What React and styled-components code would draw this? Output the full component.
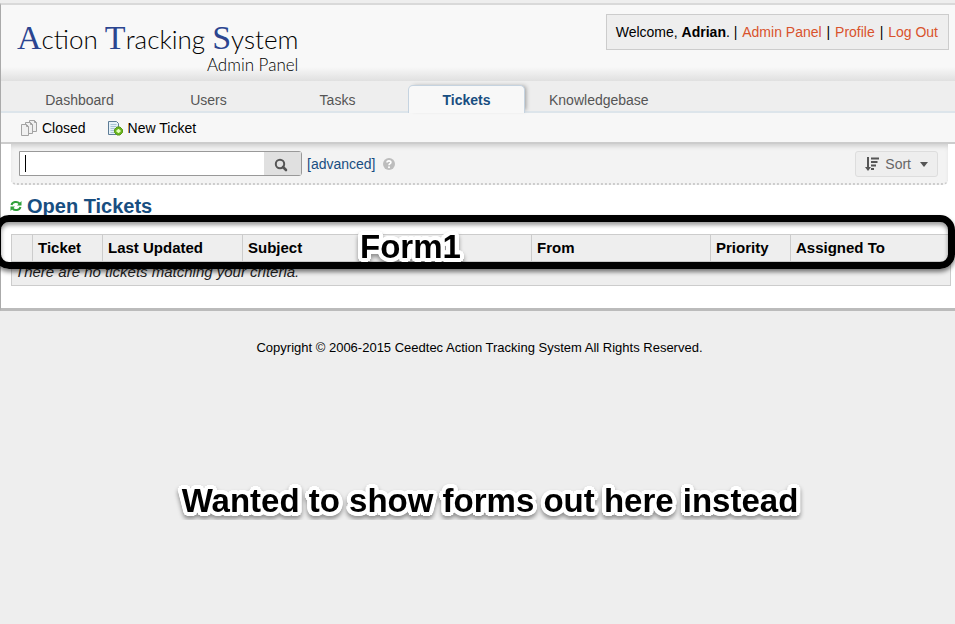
import React, { useState } from 'react';
import styled, { createGlobalStyle } from 'styled-components';

const tabs = ['Dashboard', 'Users', 'Tasks', 'Tickets', 'Knowledgebase'];

const columns = [
  { label: '', width: 21 },
  { label: 'Ticket', width: 70 },
  { label: 'Last Updated', width: 140 },
  { label: 'Subject' },
  { label: 'From', width: 179 },
  { label: 'Priority', width: 80 },
  { label: 'Assigned To', width: 160 },
];

// Ring of hard shadows, gives the notes a rounded white outline
const outline = Array.from({ length: 24 }, (_, i) => {
  const angle = (i * Math.PI) / 12;
  return `${Math.round(4 * Math.cos(angle))}px ${Math.round(4 * Math.sin(angle))}px 0 #fff`;
}).join(', ');

const ClosedIcon = () => (
  <svg width="16" height="16" viewBox="0 0 16 16" fill="#f0f0f0" stroke="#a3a3a3" aria-hidden="true">
    <path d="M8.500 .5H13.500L15.500 2.500v9h-7z" />
    <path d="M4.500 2.500H9.500L11.500 4.500v9h-7z" />
    <path d="M.5 4.500H5.500L7.500 6.500v9H.5z" />
    <path d="M5.500 4.500v2h2M9.500 2.500v2h2M13.500 .5v2h2" fill="none" />
  </svg>
);

const NewTicketIcon = () => (
  <svg width="16" height="16" viewBox="0 0 16 16" aria-hidden="true">
    <path d="M1.500 1.500h8l2 2v11h-10z" fill="#e6f1f8" stroke="#5d7c96" />
    <path d="M3.500 4.500h6M3.500 6.500h6M3.500 8.500h5M3.500 10.500h4M3.500 12.500h4" stroke="#a9c5d6" />
    <path d="M10 7h3l2.500 2.500v3L13 15h-3l-2.500-2.500v-3z" fill="#69b41e" stroke="#5a9a1a" />
    <path d="M11.500 9v4M9.500 11h4" stroke="#e6ffc0" strokeWidth="1.800" />
  </svg>
);

const SearchIcon = () => (
  <svg width="14" height="14" viewBox="0 0 14 14" fill="none" stroke="#555" strokeWidth="2" aria-hidden="true">
    <circle cx="6" cy="6" r="4.200" />
    <path d="M9 9l3 3" strokeWidth="2.600" strokeLinecap="round" />
  </svg>
);

const HelpIcon = () => (
  <svg width="12" height="12" viewBox="0 0 12 12" aria-hidden="true">
    <circle cx="6" cy="6" r="6" fill="#bdbdbd" />
    <path d="M4 4.600C4 2.200 8 2.300 7.900 4.500C7.800 5.700 6 5.700 6 7.300" fill="none" stroke="#fff" strokeWidth="1.600" />
    <circle cx="6" cy="9.200" r="1" fill="#fff" />
  </svg>
);

const SortIcon = () => (
  <svg width="14" height="14" viewBox="0 0 14 14" stroke="#555" fill="none" aria-hidden="true">
    <path d="M3 0v11" strokeWidth="2" />
    <path d="M0 10h6L3 14z" fill="#555" stroke="none" />
    <path d="M6 1.500H14M6 5H12.500M6 8.500H11M6 12H9" strokeWidth="2" />
  </svg>
);

const RefreshIcon = () => (
  <svg width="12" height="12" viewBox="0 0 12 12" fill="none" stroke="#2fa03a" strokeWidth="2" aria-hidden="true">
    <path d="M1.500 5A4.500 3.800 0 0 1 9.500 3.500" />
    <path d="M10.500 7A4.500 3.800 0 0 1 2.500 8.500" />
    <path d="M11.500 1v4.500H7zM.5 11V6.500H5z" fill="#2fa03a" stroke="none" />
  </svg>
);

const App = () => {
  const [query, setQuery] = useState('');
  const [activeTab, setActiveTab] = useState('Tickets');

  return (
    <>
      <GlobalStyle />
      <Container>
        <Header>
          <Logo href="#home">
            <LogoLine>
              <Cap>A</Cap>ction <Cap>T</Cap>racking <Cap>S</Cap>ystem
            </LogoLine>
            <LogoSub>Admin Panel</LogoSub>
          </Logo>
          <UserInfo>
            Welcome, <strong>Adrian</strong>. | <UserLink href="#admin">Admin Panel</UserLink>
            {' | '}
            <UserLink href="#profile">Profile</UserLink>
            {' | '}
            <UserLink href="#logout">Log Out</UserLink>
          </UserInfo>
        </Header>

        <Nav>
          {tabs.map((tab) => (
            <Tab
              key={tab}
              href={`#${tab.toLowerCase()}`}
              $active={tab === activeTab}
              onClick={() => setActiveTab(tab)}
            >
              {tab}
            </Tab>
          ))}
        </Nav>

        <SubNav>
          <SubLink href="#closed">
            <ClosedIcon />
            Closed
          </SubLink>
          <SubLink href="#new">
            <NewTicketIcon />
            New Ticket
          </SubLink>
        </SubNav>

        <SearchBar>
          <SearchForm onSubmit={(e) => e.preventDefault()}>
            <SearchInput
              type="text"
              aria-label="Search tickets"
              value={query}
              onChange={(e) => setQuery(e.target.value)}
            />
            <Caret />
            <SearchButton type="submit" aria-label="Search">
              <SearchIcon />
            </SearchButton>
          </SearchForm>
          <AdvancedLink href="#advanced">[advanced]</AdvancedLink>
          <HelpIcon />
          <SortButton type="button">
            <SortIcon />
            Sort
            <Arrow />
          </SortButton>
        </SearchBar>

        <Heading>
          <RefreshIcon />
          Open Tickets
        </Heading>

        <TableArea>
          <Table>
            <thead>
              <tr>
                {columns.map((col) => (
                  <Th key={col.label} $width={col.width}>{col.label}</Th>
                ))}
              </tr>
            </thead>
            <tbody>
              <tr>
                <EmptyCell colSpan={columns.length}>There are no tickets matching your criteria.</EmptyCell>
              </tr>
            </tbody>
          </Table>
          <Highlight />
          <FormNote>Form1</FormNote>
        </TableArea>
      </Container>

      <Footer>Copyright © 2006-2015 Ceedtec Action Tracking System All Rights Reserved.</Footer>
      <PageNote>Wanted to show forms out here instead</PageNote>
    </>
  );
};

export default App;

// ---------------- Styled Components ----------------

const GlobalStyle = createGlobalStyle`
  * {
    box-sizing: border-box;
  }

  body {
    margin: 0;
    background: #eee;
    color: #000;
    font-family: "Liberation Sans", Arial, sans-serif;
    font-size: 14px;
    overflow-x: hidden;
  }

  a {
    text-decoration: none;
  }
`;

const Container = styled.div`
  margin-top: 3px;
  padding-bottom: 22px;
  background: #fff;
  border-top: 2px solid #d9d9d9;
  border-bottom: 3px solid #bbb;
  border-left: 1px solid #aaa;
`;

const Header = styled.header`
  display: flex;
  justify-content: space-between;
  align-items: flex-start;
  height: 76px;
  padding: 9px 6px 0 16px;
  background: linear-gradient(to bottom, #f8f8f8 62px, #e0e0e0 100%);
`;

const Logo = styled.a`
  display: flex;
  flex-direction: column;
  margin-top: 8px;
  color: #000;
  font-family: Lato, sans-serif;
  font-weight: 300;
`;

const LogoLine = styled.span`
  font-size: 26px;
  line-height: 34px;
  white-space: nowrap;
`;

const Cap = styled.span`
  color: #2b4590;
  font-family: "Liberation Serif", serif;
  font-size: 34px;
  font-weight: 400;
  line-height: 32px;
`;

const LogoSub = styled.span`
  align-self: flex-end;
  font-size: 17px;
  line-height: 18px;
`;

const UserInfo = styled.div`
  padding: 0 9px;
  background: #eee;
  border: 1px solid #ccc;
  line-height: 34px;
  white-space: nowrap;
`;

const UserLink = styled.a`
  margin: 0 1px;
  color: #d9532c;
`;

const Nav = styled.nav`
  display: flex;
  align-items: flex-end;
  gap: 12px;
  height: 32px;
  padding-left: 20px;
  background: #eee;
  border-bottom: 2px solid #dde5eb;
`;

const Tab = styled.a`
  min-width: 117px;
  height: 28px;
  margin-bottom: -2px;
  padding: 0 11px;
  border: 1px solid ${(props) => (props.$active ? '#c5d3e0' : 'transparent')};
  border-bottom: 0;
  border-radius: 5px 5px 0 0;
  background: ${(props) => (props.$active ? '#f8f8f8' : 'transparent')};
  box-shadow: ${(props) => (props.$active ? '3px -1px 4px -2px #999' : 'none')};
  color: ${(props) => (props.$active ? '#184e81' : '#555')};
  font-weight: ${(props) => (props.$active ? 'bold' : 'normal')};
  line-height: 28px;
  text-align: center;
`;

const SubNav = styled.div`
  display: flex;
  align-items: center;
  gap: 21px;
  height: 31px;
  padding-left: 20px;
  background: #f7f7f7;
  border-bottom: 2px solid #ccc;
`;

const SubLink = styled.a`
  display: flex;
  align-items: center;
  gap: 5px;
  color: #000;
`;

const SearchBar = styled.div`
  display: flex;
  align-items: center;
  height: 41px;
  margin: 0 7px 0 10px;
  padding: 0 10px 0 8px;
  background: #f3f3f3;
  border-bottom: 2px dotted #ccc;
  border-radius: 0 0 5px 5px;
  box-shadow: inset 0 4px 5px -2px #ccc;
`;

const SearchForm = styled.form`
  position: relative;
  display: flex;
  height: 25px;
  margin-right: 5px;
  border: 1px solid #999;
  border-radius: 0 3px 3px 0;
`;

const SearchInput = styled.input`
  width: 244px;
  padding: 0 5px;
  border: 0;
  background: #fff;
  font: inherit;
  outline: none;
`;

const Caret = styled.span`
  position: absolute;
  top: 3px;
  left: 5px;
  width: 1px;
  height: 17px;
  background: #000;
`;

const SearchButton = styled.button`
  display: flex;
  align-items: center;
  width: 37px;
  padding: 2px 0 0 10px;
  border: 0;
  background: #e0e0e0;
`;

const AdvancedLink = styled.a`
  margin-right: 7px;
  color: #184e81;
`;

const SortButton = styled.button`
  display: flex;
  align-items: center;
  gap: 6px;
  height: 26px;
  margin-left: auto;
  padding: 0 9px;
  border: 1px solid #ddd;
  border-radius: 3px;
  background: #eee;
  color: #666;
  font: inherit;
`;

const Arrow = styled.span`
  margin: 2px 0 0 3px;
  border: 4px solid transparent;
  border-top: 5px solid #555;
  border-bottom: 0;
`;

const Heading = styled.h2`
  display: flex;
  align-items: center;
  gap: 5px;
  margin: 9px 0 0;
  padding-left: 9px;
  color: #184e81;
  font-size: 20px;
  line-height: 24px;
`;

const TableArea = styled.div`
  position: relative;
  padding: 16px 4px 0 10px;
`;

const Table = styled.table`
  width: 100%;
  border: 1px solid #ccc;
  border-collapse: collapse;
  background: #eee;
  font-size: 15px;
  table-layout: fixed;
`;

const Th = styled.th`
  width: ${(props) => (props.$width ? `${props.$width}px` : 'auto')};
  height: 27px;
  padding: 0 5px 2px;
  border-left: 1px solid #ccc;
  border-bottom: 1px solid #ccc;
  text-align: left;
`;

const EmptyCell = styled.td`
  height: 24px;
  padding: 0 3px 3px;
  color: #222;
  font-style: italic;
  line-height: 18px;
`;

const Highlight = styled.div`
  position: absolute;
  top: -3px;
  right: 0;
  left: -7px;
  height: 54px;
  border: 7px solid #000;
  border-radius: 15px;
  box-shadow: 0 3px 4px rgba(0, 0, 0, 0.5), inset 0 3px 4px rgba(0, 0, 0, 0.4);
`;

const Note = styled.div`
  color: #000;
  font-size: 33px;
  font-weight: bold;
  line-height: 38px;
  white-space: nowrap;
  text-shadow: ${outline};
  filter: drop-shadow(0 3px 2px rgba(0, 0, 0, 0.4));
`;

const FormNote = styled(Note)`
  position: absolute;
  top: 10px;
  left: 359px;
`;

const PageNote = styled(Note)`
  margin-top: 125px;
  padding-left: 25px;
  text-align: center;
`;

const Footer = styled.footer`
  margin-top: 28px;
  padding-left: 4px;
  font-size: 13px;
  line-height: 18px;
  text-align: center;
`;
